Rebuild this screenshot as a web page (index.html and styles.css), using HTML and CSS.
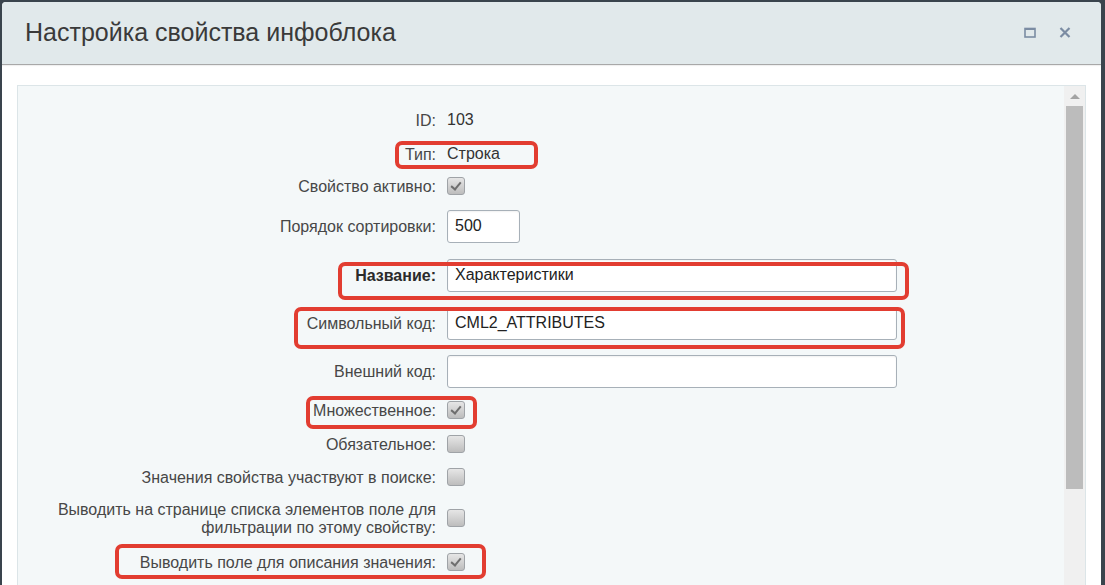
FILE: index.html
```html
<!DOCTYPE html>
<html lang="ru">
  <head>
    <meta charset="UTF-8" />
    <meta name="viewport" content="width=device-width, initial-scale=1.0" />
    <title>Настройка свойства инфоблока</title>
    <link rel="stylesheet" href="styles.css">
  </head>
  <body>
    <div class="dialog">
      <div class="dialog-head">
        <span class="dialog-title">Настройка свойства инфоблока</span>
        <div class="dialog-tools">
          <svg class="tool" width="12" height="11" viewBox="0 0 12 11">
            <rect x="1" y="1.5" width="10" height="8.5" fill="none" stroke="#7b8ca3" stroke-width="1.6" />
            <rect x="1" y="1" width="10" height="2" fill="#7b8ca3" />
          </svg>
          <svg class="tool" width="12" height="11" viewBox="0 0 12 11">
            <path d="M1.5 1 L10.5 10 M10.5 1 L1.5 10" stroke="#7b8ca3" stroke-width="2.2" fill="none" />
          </svg>
        </div>
      </div>
      <div class="dialog-body">
        <div class="panel">
          <div class="form">
            <div class="row h34"><div class="label">ID:</div><div class="value">103</div></div>
            <div class="row h34"><div class="label">Тип:</div><div class="value">Строка</div></div>
            <div class="row h30"><div class="label">Свойство активно:</div><div class="value"><span class="check checked"></span></div></div>
            <div class="row h50"><div class="label">Порядок сортировки:</div><div class="value"><div class="input input-short">500</div></div></div>
            <div class="row h48"><div class="label bold">Название:</div><div class="value"><div class="input">Характеристики</div></div></div>
            <div class="row h48"><div class="label">Символьный код:</div><div class="value"><div class="input">CML2_ATTRIBUTES</div></div></div>
            <div class="row h48"><div class="label">Внешний код:</div><div class="value"><div class="input"></div></div></div>
            <div class="row h30"><div class="label">Множественное:</div><div class="value"><span class="check checked"></span></div></div>
            <div class="row h38"><div class="label">Обязательное:</div><div class="value"><span class="check"></span></div></div>
            <div class="row h28"><div class="label">Значения свойства участвуют в поиске:</div><div class="value"><span class="check"></span></div></div>
            <div class="row h54"><div class="label">Выводить на странице списка элементов поле для<br>фильтрации по этому свойству:</div><div class="value"><span class="check"></span></div></div>
            <div class="row h34"><div class="label">Выводить поле для описания значения:</div><div class="value"><span class="check checked"></span></div></div>
          </div>
          <div class="scrollbar">
            <div class="scroll-up"></div>
            <div class="scroll-thumb"></div>
          </div>
        </div>
      </div>
    </div>

    <div class="mark mark-type"></div>
    <div class="mark mark-name"></div>
    <div class="mark mark-code"></div>
    <div class="mark mark-multi"></div>
    <div class="mark mark-desc"></div>
  </body>
</html>
```

FILE: styles.css
```css
* {
  padding: 0;
  margin: 0;
  box-sizing: border-box;
}
html,
body {
  height: 100%;
  width: 100%;
  overflow: hidden;
}
body {
  position: relative;
  background-color: #3a444d;
  padding: 2px 4px 0 2px;
  font-family: "Liberation Sans", Arial, sans-serif;
  font-size: 16px;
  color: #474747;
}
.dialog {
  height: 100%;
  background-color: #fff;
  border-radius: 4px 4px 0 0;
  overflow: hidden;
}
.dialog-head {
  display: flex;
  align-items: center;
  height: 63px;
  padding: 0 30px 2px 23px;
  background-color: #e1e9eb;
  border-bottom: 1px solid #a8a8a8;
  box-shadow: 0 1px 1px rgba(0, 0, 0, 0.06);
}
.dialog-title {
  flex: 1;
  font-size: 25px;
  color: #3a3a3a;
}
.dialog-tools {
  display: flex;
  gap: 23px;
}
.dialog-body {
  padding: 20px 15px 0 15px;
}
.panel {
  display: flex;
  background-color: #f4f8f9;
  border: 1px solid #dce5e8;
  height: 520px;
}
.form {
  flex: 1;
  padding-top: 17px;
}
.row {
  display: grid;
  grid-template-columns: 418px 1fr;
  column-gap: 11px;
  align-items: center;
}
.h28 { height: 28px; }
.h30 { height: 30px; }
.h34 { height: 34px; }
.h38 { height: 38px; }
.h48 { height: 48px; }
.h50 { height: 50px; }
.h54 { height: 54px; }
.label {
  text-align: right;
  line-height: 18px;
  padding-top: 2px;
}
.label.bold {
  font-weight: bold;
  color: #2b2b2b;
}
.value {
  display: flex;
  align-items: center;
  color: #333;
  line-height: 18px;
  min-height: 20px;
}
.input {
  width: 450px;
  height: 33px;
  padding: 0 7px;
  line-height: 30px;
  background-color: #fff;
  border: 1px solid #a7b0b8;
  border-radius: 3px;
  box-shadow: inset 0 1px 2px rgba(0, 0, 0, 0.06);
  color: #222;
}
.input-short {
  width: 73px;
}
.check {
  position: relative;
  display: inline-block;
  width: 18px;
  height: 18px;
  border: 1px solid #9fa3a7;
  border-radius: 3px;
  background: linear-gradient(#e6e6e6, #bdbdbd);
}
.check.checked::after {
  content: "";
  position: absolute;
  left: 5px;
  top: 2px;
  width: 4px;
  height: 8px;
  border: solid #6e6e6e;
  border-width: 0 2px 2px 0;
  transform: rotate(40deg);
}
.scrollbar {
  width: 21px;
  background-color: #f0f0f0;
  padding: 0 2px;
}
.scroll-up {
  width: 0;
  height: 0;
  margin: 8px auto 7px;
  border-left: 5px solid transparent;
  border-right: 5px solid transparent;
  border-bottom: 5px solid #a3a3a3;
}
.scroll-thumb {
  height: 383px;
  background-color: #bcbcbc;
}
.mark {
  position: absolute;
  border: 4px solid #e23d31;
  border-radius: 7px;
}
.mark-type {
  left: 395px;
  top: 141px;
  width: 143px;
  height: 28px;
}
.mark-name {
  left: 338px;
  top: 262px;
  width: 571px;
  height: 38px;
}
.mark-code {
  left: 294px;
  top: 307px;
  width: 611px;
  height: 42px;
}
.mark-multi {
  left: 306px;
  top: 396px;
  width: 171px;
  height: 33px;
}
.mark-desc {
  left: 115px;
  top: 544px;
  width: 371px;
  height: 35px;
}
```
